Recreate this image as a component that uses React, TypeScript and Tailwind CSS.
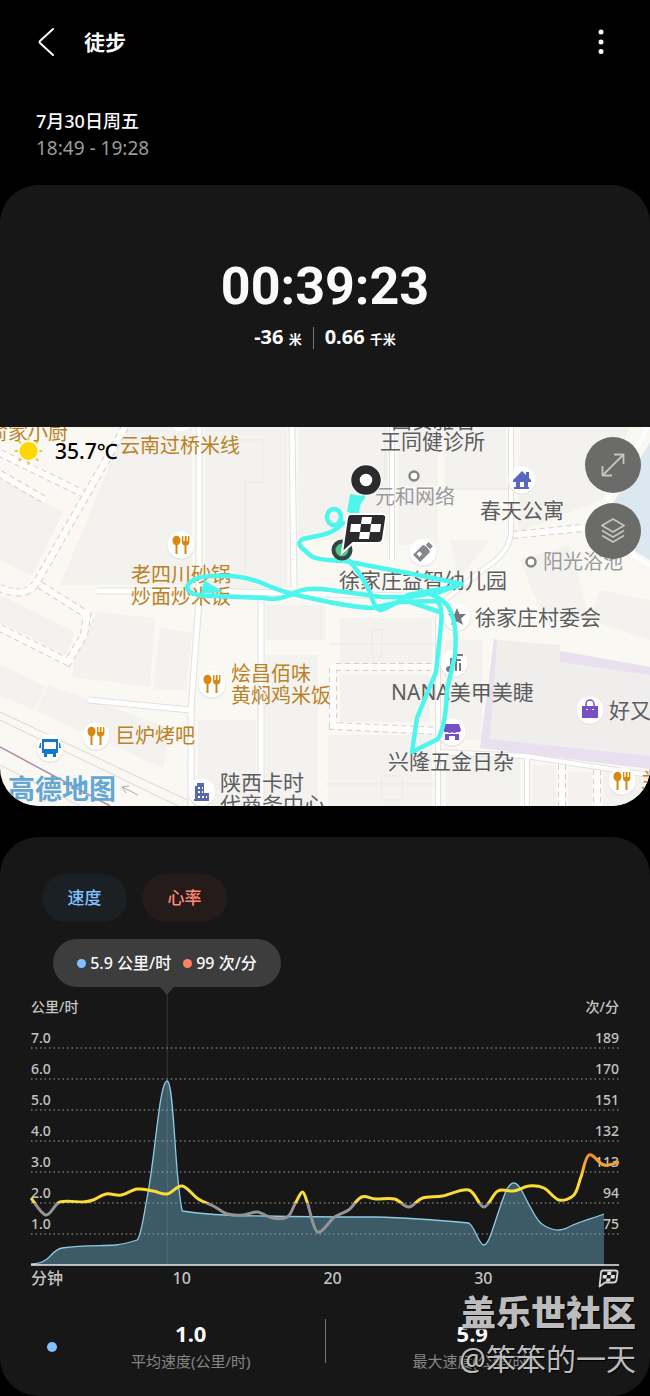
import { ReactNode } from "react";

type Point = [number, number];

const SPEED_LINE =
  "M0 216C8 216 12 214 16 211C21 207 24 201 31 200C52 197 70 198 84 197C94 196 100 194 106 192C110 188 112 170 116 149C124 110 128 33 136 33C141 33 143 90 146 124C148 145 149 155 151 163C170 166 200 168 235 168C275 169 310 169 344 169C380 170 415 173 437 175C443 178 447 197 452 197C457 197 461 180 467 163C472 148 476 135 482 135C488 135 493 150 499 160C504 170 508 176 513 178C524 184 530 183 541 177C553 172 562 170 572 166";

const HEART_POINTS: Point[] = [
  [0, 150], [15, 167], [29, 154], [52, 154], [62, 152], [75, 146], [90, 147], [106, 141], [122, 143],
  [136, 146], [151, 138], [167, 151], [182, 158], [196, 166], [212, 167], [226, 164], [241, 170],
  [256, 169], [264, 155], [271, 144], [276, 155], [286, 184], [303, 169], [317, 162], [330, 149],
  [344, 151], [363, 151], [377, 159], [391, 150], [411, 148], [437, 142], [452, 159], [466, 143],
  [482, 143], [497, 138], [512, 140], [527, 152], [542, 147], [549, 129], [557, 107], [572, 117], [587, 114],
];

const SCALE = [
  ["7.0", "189"],
  ["6.0", "170"],
  ["5.0", "151"],
  ["4.0", "132"],
  ["3.0", "113"],
  ["2.0", "94"],
  ["1.0", "75"],
];

const PLACES = [
  { text: "西安雅君", x: 391, y: -18, kind: "dark" },
  { text: "俞家小厨", x: -12, y: -5, kind: "food" },
  { text: "云南过桥米线", x: 120, y: 8, kind: "food" },
  { text: "王同健诊所", x: 380, y: 3, kind: "dark" },
  { text: "元和网络", x: 375, y: 59, kind: "muted" },
  { text: "春天公寓", x: 480, y: 72, kind: "dark" },
  { text: "阳光浴池", x: 543, y: 124, kind: "muted" },
  { text: "老四川砂锅\n炒面炒米饭", x: 131, y: 137, kind: "food" },
  { text: "徐家庄益智幼儿园", x: 339, y: 142, kind: "dark" },
  { text: "徐家庄村委会", x: 475, y: 179, kind: "dark" },
  { text: "烩昌佰味\n黄焖鸡米饭", x: 231, y: 236, kind: "food" },
  { text: "NANA美甲美睫", x: 391, y: 254, kind: "dark" },
  { text: "好又多", x: 609, y: 272, kind: "dark" },
  { text: "巨炉烤吧", x: 115, y: 298, kind: "food" },
  { text: "兴隆五金日杂", x: 388, y: 323, kind: "dark" },
  { text: "兰州", x: 641, y: 343, kind: "food" },
  { text: "陕西卡时\n代商务中心", x: 220, y: 344, kind: "dark" },
];

const PLACE_STYLES: { [key: string]: string } = {
  dark: "text-[21px] text-[#5c5d61]",
  food: "text-[20px] text-[#b98227]",
  muted: "text-[20px] text-[#9a9b9f]",
};

function smooth(points: Point[]) {
  let d = `M${points[0][0]} ${points[0][1]}`;
  for (let i = 0; i < points.length - 1; i++) {
    const before = points[i - 1] ?? points[i];
    const from = points[i];
    const to = points[i + 1];
    const after = points[i + 2] ?? to;
    d += `C${from[0] + (to[0] - before[0]) / 6} ${from[1] + (to[1] - before[1]) / 6}`;
    d += ` ${to[0] - (after[0] - from[0]) / 6} ${to[1] - (after[1] - from[1]) / 6} ${to[0]} ${to[1]}`;
  }
  return d;
}

export default function App() {
  return (
    <div className="relative min-h-screen overflow-hidden bg-black font-['Noto_Sans','Noto_Sans_CJK_SC',sans-serif] text-[#fafafa]">
      <Header />
      <div className="px-9 pt-6 pb-6">
        <p className="text-[18px] leading-[27px] font-medium">7月30日周五</p>
        <p className="text-[19px] leading-[26px] text-[#9b9b9b]">18:49 - 19:28</p>
      </div>
      <main className="flex flex-col gap-[31px]">
        <section className="overflow-hidden rounded-[38px] bg-[#171717]">
          <Summary />
          <RouteMap />
        </section>
        <section className="rounded-[38px] bg-[#171717] px-[31px] pt-[37px] pb-[21px]">
          <Chart />
          <Stats />
        </section>
      </main>
      <Watermark />
    </div>
  );
}

function Header() {
  return (
    <header className="flex h-[84px] items-center pr-9 pl-[34px]">
      <button type="button" aria-label="返回">
        <svg width="24" height="30" viewBox="0 0 24 30" fill="none" stroke="#fafafa" strokeWidth="2" strokeLinecap="round" strokeLinejoin="round">
          <path d="M19 2L6 14q-1 1 0 2L19 28" />
        </svg>
      </button>
      <h1 className="ml-[26px] flex-1 text-[21px] leading-7 font-bold">徒步</h1>
      <button type="button" aria-label="更多选项">
        <svg width="26" height="30" viewBox="0 0 26 30" fill="#fafafa">
          <circle cx="13" cy="5" r="2.5" />
          <circle cx="13" cy="15" r="2.5" />
          <circle cx="13" cy="24.500" r="2.500" />
        </svg>
      </button>
    </header>
  );
}

function Summary() {
  return (
    <div className="flex h-[242px] flex-col items-center pt-[72px]">
      <p className="font-[Roboto,sans-serif] text-[52px] leading-[60px] font-bold">00:39:23</p>
      <div className="mt-[7px] flex h-7 items-center">
        <p className="text-[20px] leading-7 font-bold">
          -36 <span className="text-[13px]">米</span>
        </p>
        <span className="mx-[11px] h-[22px] w-px bg-[#777]" />
        <p className="text-[20px] leading-7 font-bold">
          0.66 <span className="text-[13px]">千米</span>
        </p>
      </div>
    </div>
  );
}

function RouteMap() {
  return (
    <div className="relative h-[379px] overflow-hidden bg-[#faf8f3]">
      <MapTiles />
      {PLACES.map((place) => (
        <p
          key={place.text}
          className={`absolute leading-[22px] font-normal whitespace-pre ${PLACE_STYLES[place.kind]}`}
          style={{ left: place.x, top: place.y }}
        >
          {place.text}
        </p>
      ))}
      <Track />
      <p className="absolute top-[346px] left-2 text-[27px] leading-8 font-bold text-[#65a7d3]">高德地图</p>
      <div className="absolute top-2 left-3 flex items-center gap-[10px]">
        <svg width="33" height="32" viewBox="0 0 33 32" stroke="#edbf45" strokeWidth="2" strokeLinecap="round">
          <path d="M16.500 3v1.500M16.500 27.500V29M3.500 16H5M28 16h1.500M7.300 6.800l1 1M24.700 24.200l1 1M7.300 25.200l1-1M24.700 7.800l1-1" />
          <circle cx="16.500" cy="16" r="9" fill="#ffd600" stroke="none" />
        </svg>
        <span className="text-[21px] leading-8 font-medium text-black">35.7℃</span>
      </div>
      <div className="absolute top-[10px] right-[9px] flex flex-col gap-[10px]">
        <MapButton label="全屏">
          <path d="M6 26L26 6M17 5.500h9.500V15M5.500 17v9.500H15" />
        </MapButton>
        <MapButton label="图层">
          <path d="M16 4l11 6.500-11 6.500-11-6.500zM5 15.500l11 6.500 11-6.500M5 20.500l11 6.500 11-6.500" />
        </MapButton>
      </div>
    </div>
  );
}

function MapButton({ label, children }: { label: string; children: ReactNode }) {
  return (
    <button type="button" aria-label={label} className="flex size-14 items-center justify-center rounded-full bg-[#6b6b6a]">
      <svg width="32" height="32" viewBox="0 0 32 32" fill="none" stroke="#c4c4c3" strokeWidth="1.800" strokeLinejoin="round">
        {children}
      </svg>
    </button>
  );
}

function Road({ d, width = 5 }: { d: string; width?: number }) {
  return (
    <>
      <path d={d} stroke="#e3e1e0" strokeWidth={width + 2} />
      <path d={d} stroke="#fff" strokeWidth={width} />
    </>
  );
}

function Footway({ d }: { d: string }) {
  return (
    <>
      <path d={d} stroke="#d3cfd0" strokeWidth="8" strokeDasharray="5 4" />
      <path d={d} stroke="#fefdfb" strokeWidth="6" />
    </>
  );
}

function Pin({ x, y, color, children }: { x: number; y: number; color: string; children: ReactNode }) {
  return (
    <g transform={`translate(${x} ${y})`}>
      <circle r="14" cy="1" fill="#e9e6e2" />
      <circle r="13.500" fill="#fff" />
      <g fill={color}>{children}</g>
    </g>
  );
}

function FoodPin({ x, y }: { x: number; y: number }) {
  return (
    <Pin x={x} y={y} color="#d9880f">
      <ellipse cx="-4.500" cy="-4.500" rx="4" ry="4.800" />
      <path d="M-5.500 0h2v9h-2zM1-9h1.400v5h1.400v-5h1.800v5H7v-5h1.400v6q0 3-2.900 3.500V9h-2V.500Q1 0 1-3z" />
    </Pin>
  );
}

function MapTiles() {
  return (
    <svg className="absolute inset-0 h-full w-full" viewBox="0 427 650 379" preserveAspectRatio="xMinYMin slice" fill="none">
      <g fill="#f4f2ee">
        <path d="M130 427H192V585H60L118 445zM0 475L63 512L32 575L0 560z" />
        <path d="M0 595L75 632L66 655L0 622zM98 612L155 618L150 687L72 677L76 650zM160 628L192 632L186 690L153 690z" />
        <path d="M0 665L46 687L34 710L0 695zM48 685L90 700L170 728L163 768L36 711z" />
        <path d="M205 427H287V588H205zM298 427H388V540H298zM398 427H438V486H398zM398 492H438V545H398zM445 427H506V490H445z" />
        <path d="M266 605H325V640H266zM340 618H432V665H340zM265 655H318V806H265zM198 720H256V806H198zM340 675H430V722H340zM328 735H432V806H328z" />
        <path d="M520 427H630L602 500L518 532zM450 540H490L458 580zM520 560L570 545L590 620L540 610zM600 590L650 600V640L590 620z" />
        <path d="M532 765H556V806H532zM568 772H592V806H568zM603 772H650V806H603zM445 640H482V740H445zM446 752H520V806H446z" />
      </g>
      <path d="M650 442L612 505L636 552L650 560z" fill="#dce8f0" />
      <path d="M494 639L650 667V769L480 748z" fill="#e8e0ef" />
      <path d="M497 640L560 645V662L650 675V756L490 739z" fill="#f0eeec" />
      <g stroke="#ebe8e5">
        <path d="M205 440H263V482H245V580M440 489H510M385 427V480M330 644H440M372 630h10v26h-10zM325 784H440M382 776h20v24h-20z" />
        <path d="M0 712L200 806M0 720L178 806M0 765L80 806" stroke="#dbd6d8" />
      </g>
      <path d="M0 747L110 806" stroke="#b28aaa" strokeWidth="1.500" />
      <Footway d="M0 453L82 493M0 474L45 500M125 427L38 580Q27 600 0 588M40 585L86 614M0 628L68 662L84 635L88 610" />
      <Footway d="M440 667H333V726L440 731M513 535L592 527M562 765V806M597 770V806" />
      <Road d="M199 427V600L191 710V806M292 427L294 588M261 598V806M97 591H194M200 591L440 597M88 700L190 710" />
      <Road d="M392 427V560M511 427V530Q511 552 485 568L445 600Q438 606 438 625V806M438 752L525 756L650 775M527 756V806" width={4} />
      <path d="M648 427L608 498L634 556L650 566" stroke="#fff" strokeWidth="4" />
      <path d="M122 787l16 8M122 787l7-1M122 787l4 6" stroke="#aaa" />
      <circle cx="181" cy="420" r="11" fill="#fff" />
      <FoodPin x={181} y={545} />
      <FoodPin x={212} y={684} />
      <FoodPin x={96} y={736} />
      <FoodPin x={622} y={781} />
      <Pin x={50} y={748} color="#1477c9">
        <path fillRule="evenodd" d="M-8-9H8v14H6v4H3V6h-6v3h-3V5h-2zM-6-6V1H6v-7zM-10-5h1v5h-2zM10-5h-1v5h2z" />
      </Pin>
      <Pin x={202} y={792} color="#5868ae">
        <path fillRule="evenodd" d="M-5-9h7V1h5v8H-8V7h1V-6h2zM-4-5v2h2v-2zM0-5v2h1v-2zM-4-1v2h2v-2zM0-1v2h1v-2zM-4 4v2h2V4zM0 4v2h2V4zM4 4v2h1V4z" />
      </Pin>
      <Pin x={522} y={480} color="#5868be">
        <path d="M0-9L4-5v-3h3v6l2 2v2H6v5h1v2H-8V7h2V2h-3V0zM-2 2v5H2V2z" fillRule="evenodd" />
      </Pin>
      <Pin x={457} y={617} color="#77787d">
        <path d="M0-9L2.500-3H9L4 1.500 6 8 0 4.500-6 8-4 1.500-9-3h6.500z" />
      </Pin>
      <Pin x={454} y={663} color="#77787d">
        <path d="M-4-5h2V5q0 4-3 4t-3-3 4-3zM1-9h8v2H3v3h4v2H3v10H1zM5 0h2v8H5z" />
      </Pin>
      <Pin x={452} y={732} color="#7650c5">
        <path d="M-7-8H7L9-2Q8 1 5 0 2 2 0 0-2 2-5 0-8 1-9-2zM-7 2H7v6H3V4h-6v4h-4z" />
      </Pin>
      <Pin x={590} y={710} color="#7650c5">
        <path d="M-8-4H8V8H-8z" />
        <path d="M-4-4v-2a4 4 0 018 0v2" fill="none" stroke="#7650c5" strokeWidth="1.500" />
        <path d="M-3-1v1M3-1v1" stroke="#fff" strokeWidth="2" />
      </Pin>
      <Pin x={423} y={552} color="#85868a">
        <g transform="rotate(-45)">
          <path fillRule="evenodd" d="M-9-5H5l1 3v4L5 5H-9zM-6-3v4h4v-4zM7-3h4v6H7z" />
        </g>
      </Pin>
      <g stroke="#85868a" strokeWidth="2.500" fill="#fff">
        <circle cx="414" cy="476" r="4.500" />
        <circle cx="531" cy="562" r="4.500" />
      </g>
    </svg>
  );
}

function Track() {
  return (
    <svg className="absolute inset-0 h-full w-full" viewBox="0 427 650 379" preserveAspectRatio="xMinYMin slice" fill="none">
      <g stroke="#4cf6ec" strokeWidth="4.500" strokeLinecap="round" strokeLinejoin="round">
        <path d="M356 495L353 513" strokeWidth="12" strokeLinecap="butt" />
        <path d="M363 497L352 512M343 523Q335 532 322 535L303 539Q297 542 301 547L311 556Q316 560 345 561L428 577L462 584L440 592L410 597L382 597L330 590Q305 586 292 594Q278 601 265 598L215 596Q191 597 187 588Q189 577 213 576Q240 574 262 583Q280 592 310 598Q350 607 372 608L400 602L436 601Q443 603 441 625L436 672L417 718L412 752L438 739Q446 725 447 690L455 655Q458 620 447 605Q440 596 420 591" />
        <path d="M345 557Q358 568 370 592Q374 608 380 610Q386 610 408 595L458 586M410 602L440 612" />
        <ellipse cx="334" cy="517" rx="7" ry="8" />
      </g>
      <path d="M204 580l-3 14 22-2z" fill="#4cf6ec" />
      <circle cx="342" cy="550" r="8.500" fill="#4cc88a" stroke="#354442" strokeWidth="4" />
      <circle cx="366" cy="480" r="15.500" fill="#fff" />
      <circle cx="366" cy="480" r="10.500" fill="#fff" stroke="#2b2a2c" strokeWidth="8.500" />
      <path d="M351 514H382Q387 514 386 519L383 539Q382 543 378 543H353L342 553 347 518Q348 514 351 514z" fill="#2b2a2c" stroke="#fff" strokeWidth="2" />
      <path d="M362 517h10l-1 7h-10zM351 524h10l-1 8h-10zM371 524h10l-1 8h-10zM360 532h10l-1 7h-10z" fill="#fff" />
    </svg>
  );
}

function Chart() {
  return (
    <div>
      <div className="flex gap-[15px] pl-[11px]">
        <button type="button" className="h-12 w-[85px] rounded-full bg-[#1a2024] text-[17px] font-medium text-[#82c0ff]">速度</button>
        <button type="button" className="h-12 w-[85px] rounded-full bg-[#241b1a] text-[17px] font-medium text-[#ff8a73]">心率</button>
      </div>
      <div className="relative mt-[17px] ml-[22px] flex h-12 w-[228px] items-center justify-center gap-3 rounded-full bg-[#3d3d3d] text-[16px] font-medium whitespace-nowrap">
        <span className="flex items-center gap-1">
          <i className="size-[9px] rounded-full bg-[#82c0ff]" />
          5.9 公里/时
        </span>
        <span className="flex items-center gap-1">
          <i className="size-[9px] rounded-full bg-[#ff8068]" />
          99 次/分
        </span>
        <svg className="absolute top-12 left-[107px]" width="14" height="8" viewBox="0 0 14 8">
          <path d="M0 0H14L7 8z" fill="#3d3d3d" />
        </svg>
      </div>
      <div className="mt-[10px] flex h-5 items-end justify-between text-[14px] leading-[20px] font-medium text-[#c4c4c4]">
        <span>公里/时</span>
        <span>次/分</span>
      </div>
      <div className="relative">
        {SCALE.map(([speed, heart]) => (
          <div key={speed} className="flex h-[31px] items-end justify-between text-[14px] leading-5 font-medium text-[#c4c4c4]">
            <span>{speed}</span>
            <span>{heart}</span>
          </div>
        ))}
        <div className="h-[31px]" />
        <svg className="absolute inset-0 h-full w-full" viewBox="0 -31 587 248" preserveAspectRatio="none" fill="none" overflow="visible">
          <defs>
            <linearGradient id="heartZones" gradientUnits="userSpaceOnUse" x1="0" y1="107" x2="0" y2="187">
              <stop offset="0" stopColor="#f5912b" />
              <stop offset="0.150" stopColor="#fba733" />
              <stop offset="0.300" stopColor="#fbdc35" />
              <stop offset="0.600" stopColor="#fbdc35" />
              <stop offset="0.600" stopColor="#949494" />
              <stop offset="1" stopColor="#949494" />
            </linearGradient>
          </defs>
          <path d="M136 -55V217" stroke="#393939" />
          <path d={`${SPEED_LINE}V217H0z`} fill="#649fb6" fillOpacity="0.500" />
          {SCALE.map(([speed], i) => (
            <path key={speed} d={`M0 ${i * 31}H587`} stroke="#a3a3a3" strokeDasharray="1.500 3" />
          ))}
          <path d={SPEED_LINE} stroke="#8fc9e4" strokeWidth="1.300" />
          <path d="M0 217H587" stroke="#e6eef0" strokeWidth="1.500" />
          <path d={smooth(HEART_POINTS)} stroke="url(#heartZones)" strokeWidth="3" strokeLinejoin="round" />
        </svg>
      </div>
      <div className="grid h-[26px] grid-cols-[5fr_10fr_10fr_10fr_4fr] items-center text-center text-[16px] leading-6 font-medium text-[#c4c4c4]">
        <span className="text-left whitespace-nowrap">分钟</span>
        <span>10</span>
        <span>20</span>
        <span>30</span>
        <svg className="justify-self-end" width="21" height="19" viewBox="0 0 21 19" fill="none">
          <path d="M5 1.500H17.500Q20 1.500 19.500 4L18.500 11Q18 13.500 15.500 13.500H7L1.500 17.500 3 4Q3 1.500 5 1.500z" stroke="#d4d4d4" strokeWidth="1.800" strokeLinejoin="round" />
          <path d="M9.500 2.500h4l-.5 3.500h-4zM5 6h4l-.5 3.500h-4zM13 6h4l-.5 3.500h-4zM8.500 9.500h4l-.5 3h-4z" fill="#e3e3e3" />
        </svg>
      </div>
    </div>
  );
}

function Stats() {
  return (
    <div className="mt-7 grid grid-cols-[1fr_1px_1fr]">
      <div className="flex items-center pl-4">
        <i className="size-[10px] rounded-full bg-[#82c0ff]" />
        <Stat value="1.0" label="平均速度(公里/时)" />
      </div>
      <span className="h-11 bg-[#777]" />
      <div className="flex items-center">
        <Stat value="5.9" label="最大速度(公里/时)" />
      </div>
    </div>
  );
}

function Stat({ value, label }: { value: string; label: string }) {
  return (
    <div className="flex-1 text-center">
      <p className="text-[22px] leading-7 font-bold">{value}</p>
      <p className="text-[15px] leading-7 text-[#858585]">{label}</p>
    </div>
  );
}

function Watermark() {
  return (
    <div className="pointer-events-none absolute right-[14px] bottom-[14px] text-right whitespace-nowrap text-[#bcbcbc] text-shadow-[1px_1px_1px_#000]">
      <p className="text-[35px] leading-[46px] font-black">盖乐世社区</p>
      <p className="text-[30px] leading-[46px] font-normal">@笨笨的一天</p>
    </div>
  );
}
